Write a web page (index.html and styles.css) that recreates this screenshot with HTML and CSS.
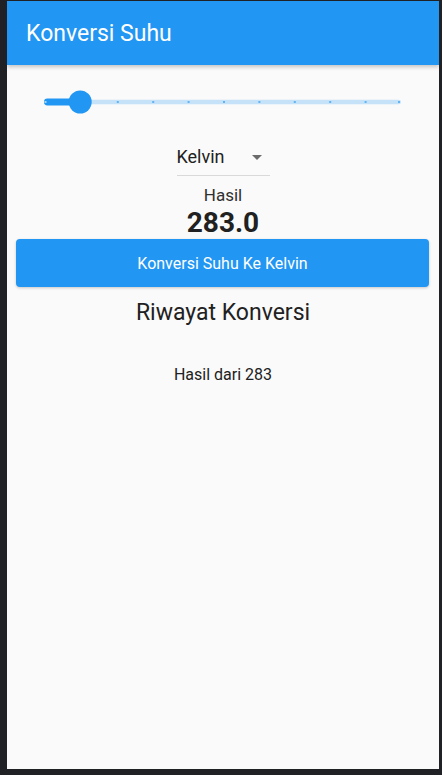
FILE: index.html
```html
<!DOCTYPE html>
<html>
<head>
<meta charset="utf-8">
<link rel="stylesheet" href="styles.css">
</head>
<body>
<div class="screen">
  <header class="appbar"><span class="title">Konversi Suhu</span></header>
  <main class="content">
    <div class="slider">
      <svg width="432" height="56" viewBox="0 0 432 56">
        <rect x="37" y="25.7" width="357" height="4.6" rx="2.3" fill="#C6E2F8"/>
        <rect x="37" y="24.55" width="38" height="6.9" rx="3.45" fill="#2196F3"/>
        <g fill="#2196F3" fill-opacity="0.6">
          <rect x="109.8" y="27" width="2" height="2"/>
          <rect x="145.2" y="27" width="2" height="2"/>
          <rect x="180.6" y="27" width="2" height="2"/>
          <rect x="216" y="27" width="2" height="2"/>
          <rect x="251.4" y="27" width="2" height="2"/>
          <rect x="286.8" y="27" width="2" height="2"/>
          <rect x="322.2" y="27" width="2" height="2"/>
          <rect x="357.6" y="27" width="2" height="2"/>
          <rect x="391" y="27" width="2" height="2"/>
        </g>
        <rect x="37.5" y="27" width="2" height="2" fill="#ffffff" fill-opacity="0.6"/>
        <circle cx="73.2" cy="28" r="11.5" fill="#2196F3"/>
      </svg>
    </div>
    <div class="dropdown">
      <span class="dd-text">Kelvin</span>
      <svg class="dd-arrow" width="10" height="5" viewBox="0 0 10 5"><path d="M0 0 L10 0 L5 5 Z" fill="#6b6b6b"/></svg>
    </div>
    <div class="label">Hasil</div>
    <div class="result">283.0</div>
    <button class="convert">Konversi Suhu Ke Kelvin</button>
    <h2 class="history-title">Riwayat Konversi</h2>
    <div class="history-item">Hasil dari 283</div>
  </main>
</div>
</body>
</html>
```
FILE: styles.css
```css
html, body {
  margin: 0;
  padding: 0;
  background: #202124;
}
body {
  font-family: Roboto, "Noto Sans", sans-serif;
}
.screen {
  margin: 1px 3px 6px 7px;
  height: 768px;
  background: #fafafa;
  display: flex;
  flex-direction: column;
  overflow: hidden;
}
.appbar {
  height: 64px;
  flex-shrink: 0;
  background: #2196F3;
  display: flex;
  align-items: center;
  padding-left: 19px;
  color: #ffffff;
  font-size: 23px;
  box-shadow: 0 2px 4px rgba(0, 0, 0, 0.22);
  position: relative;
  z-index: 1;
}
.content {
  display: flex;
  flex-direction: column;
  align-items: center;
}
.slider {
  margin-top: 9px;
  height: 56px;
  width: 100%;
}
.slider svg {
  display: block;
}
.dropdown {
  width: 93px;
  height: 45px;
  box-sizing: content-box;
  border-bottom: 1px solid #d9d9d9;
  display: flex;
  align-items: flex-start;
}
.dd-text {
  margin-top: 16px;
  line-height: 22px;
  font-size: 18px;
  color: #212121;
}
.dd-arrow {
  margin-left: auto;
  margin-right: 8px;
  margin-top: 25px;
  display: block;
}
.label {
  margin-top: 9px;
  font-size: 17px;
  line-height: 20px;
  color: #303030;
}
.result {
  margin-top: 1px;
  font-size: 28px;
  line-height: 33px;
  font-weight: 700;
  color: #212121;
}
.convert {
  align-self: stretch;
  margin: 0 10px 0 9px;
  height: 48px;
  border: none;
  border-radius: 4px;
  background: #2196F3;
  color: #ffffff;
  font-family: Roboto, "Noto Sans", sans-serif;
  font-size: 16px;
  box-shadow: 0 1px 3px rgba(0, 0, 0, 0.2);
  padding: 0;
}
.history-title {
  margin: 13px 0 0;
  font-size: 23px;
  line-height: 26px;
  font-weight: 400;
  color: #212121;
}
.history-item {
  margin-top: 39px;
  font-size: 16px;
  line-height: 19px;
  color: #212121;
}
```
